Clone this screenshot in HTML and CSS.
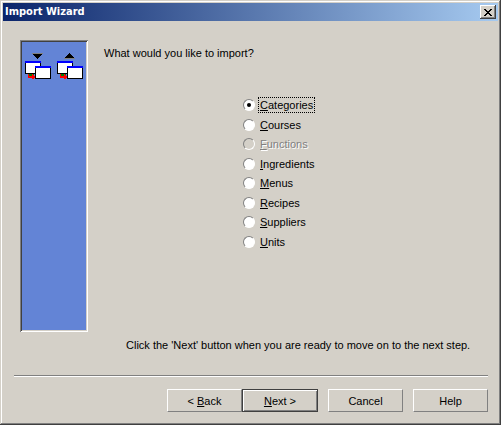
FILE: index.html
```
<!DOCTYPE html>
<html lang="en">
<head>
    <meta charset="UTF-8">
    <meta name="viewport" content="width=device-width, initial-scale=1.0">
    <title>Import Wizard</title>
    <link rel="stylesheet" href="styles.css">
</head>
<body>
    <form class="window">
        <div class="titlebar">
            <h1>Import Wizard</h1>
            <button type="button" class="close" aria-label="Close">
                <svg width="8" height="7" viewBox="0 0 8 7" shape-rendering="crispEdges">
                    <path d="M0 0h2v1h1v1h2v-1h1v-1h2v1h-1v1h-1v1h-1v1h1v1h1v1h1v1h-2v-1h-1v-1h-2v1h-1v1h-2v-1h1v-1h1v-1h1v-1h-1v-1h-1v-1h-1z"/>
                </svg>
            </button>
        </div>

        <div class="content">
            <div class="side">
                <svg width="27" height="27" viewBox="0 0 27 27" shape-rendering="crispEdges">
                    <path fill="#808080" d="M8 1h11v1h-11z"/>
                    <path d="M9 2h9v1h-1v1h-1v1h-1v1h-1v1h-1v-1h-1v-1h-1v-1h-1v-1h-1z"/>
                    <path d="M1 9h16v13h-16z"/>
                    <path fill="#fff" d="M2 11h14v10h-14z"/>
                    <path fill="#00f" d="M1 9h16v2h-16z"/>
                    <path fill="#008000" d="M5 22h5v2h-5z"/>
                    <path fill="#f00" d="M4 22h1v2h3v-2h1v1h1v1h1v2h-1v1h-2v-1h-4z"/>
                    <path d="M11 14h16v13h-16z"/>
                    <path fill="#fff" d="M12 16h14v10h-14z"/>
                    <path fill="#00f" d="M11 14h16v2h-16z"/>
                </svg>
                <svg width="27" height="27" viewBox="0 0 27 27" shape-rendering="crispEdges">
                    <path fill="#808080" d="M8 6h11v1h-11z"/>
                    <path d="M13 1h1v1h1v1h1v1h1v1h1v1h-9v-1h1v-1h1v-1h1v-1h1z"/>
                    <path d="M1 9h16v13h-16z"/>
                    <path fill="#fff" d="M2 11h14v10h-14z"/>
                    <path fill="#00f" d="M1 9h16v2h-16z"/>
                    <path fill="#008000" d="M5 22h5v2h-5z"/>
                    <path fill="#f00" d="M4 22h1v2h3v-2h1v1h1v1h1v2h-1v1h-2v-1h-4z"/>
                    <path d="M11 14h16v13h-16z"/>
                    <path fill="#fff" d="M12 16h14v10h-14z"/>
                    <path fill="#00f" d="M11 14h16v2h-16z"/>
                </svg>
            </div>
            <div class="main">
                <p id="question">What would you like to import?</p>
                <div class="options" role="radiogroup" aria-labelledby="question">
                    <label><input type="radio" name="type" checked><span class="focused"><u>C</u>ategories</span></label>
                    <label><input type="radio" name="type"><span><u>C</u>ourses</span></label>
                    <label class="disabled"><input type="radio" name="type" disabled><span><u>F</u>unctions</span></label>
                    <label><input type="radio" name="type"><span><u>I</u>ngredients</span></label>
                    <label><input type="radio" name="type"><span><u>M</u>enus</span></label>
                    <label><input type="radio" name="type"><span><u>R</u>ecipes</span></label>
                    <label><input type="radio" name="type"><span><u>S</u>uppliers</span></label>
                    <label><input type="radio" name="type"><span><u>U</u>nits</span></label>
                </div>
                <p class="hint">Click the 'Next' button when you are ready to move on to the next step.</p>
            </div>
        </div>

        <div class="footer">
            <div class="steps">
                <button type="button" class="btn">&lt; <u>B</u>ack</button>
                <button type="submit" class="btn default"><u>N</u>ext &gt;</button>
            </div>
            <button type="button" class="btn">Cancel</button>
            <button type="button" class="btn">Help</button>
        </div>
    </form>
</body>
</html>
```
FILE: styles.css
```
* {
    margin: 0;
    padding: 0;
    box-sizing: border-box;
}
body {
    font-family: "Liberation Sans", Arial, sans-serif;
    font-size: 11px;
    line-height: 14px;
    color: #000;
    background-color: #d4d0c8;
}
.window {
    display: flex;
    flex-direction: column;
    min-height: 100vh;
    padding: 3px;
    box-shadow: inset -1px -1px #404040, inset 1px 1px #d4d0c8, inset -2px -2px #808080, inset 2px 2px #fff;
}
.titlebar {
    display: flex;
    align-items: center;
    justify-content: space-between;
    height: 18px;
    padding: 0 2px;
    background: linear-gradient(to right, #0a246a, #a6caf0);
}
.titlebar h1 {
    font-family: "DejaVu Sans Condensed", "Noto Sans", sans-serif;
    font-size: 11px;
    font-weight: bold;
    color: #fff;
}
.close {
    display: flex;
    align-items: center;
    justify-content: center;
    width: 16px;
    height: 14px;
    border: none;
    background-color: #d4d0c8;
    box-shadow: inset -1px -1px #404040, inset 1px 1px #fff, inset -2px -2px #808080;
}
.content {
    display: flex;
    flex: 1;
    gap: 16px;
    padding: 19px 10px 0 17px;
}
.side {
    display: flex;
    gap: 5px;
    width: 68px;
    height: 292px;
    padding: 12px 4px;
    background-color: #6384d6;
    box-shadow: inset 1px 1px #808080, inset -1px -1px #fff, inset 2px 2px #404040, inset -2px -2px #d4d0c8;
}
.main {
    display: flex;
    flex: 1;
    flex-direction: column;
    padding-top: 6px;
}
.options {
    display: flex;
    flex-direction: column;
    align-items: flex-start;
    justify-content: space-between;
    height: 153px;
    margin: 37px 0 0 139px;
}
.options label {
    display: flex;
    align-items: center;
    gap: 4px;
    height: 16px;
}
.options span {
    padding: 0 1px;
    border: 1px solid transparent;
    margin-left: -1px;
}
.options .focused {
    border: 1px dotted #000;
}
.options input {
    appearance: none;
    display: grid;
    place-items: center;
    width: 12px;
    height: 12px;
    border: 1px solid;
    border-color: #808080 #fff #fff #808080;
    border-radius: 50%;
    background-color: #fff;
}
.options input:checked::before {
    content: "";
    width: 4px;
    height: 4px;
    border-radius: 50%;
    background-color: #000;
}
.options input:disabled {
    background-color: #d4d0c8;
}
.disabled {
    color: #808080;
    text-shadow: 1px 1px #fff;
}
.hint {
    margin-top: 88px;
    padding-left: 22px;
}
.footer {
    display: flex;
    justify-content: flex-end;
    gap: 10px;
    margin: 0 10px 10px 11px;
    padding-top: 13px;
    border-top: 1px solid #808080;
    box-shadow: inset 0 1px #fff;
}
.steps {
    display: flex;
}
.btn {
    width: 75px;
    height: 23px;
    border: 1px solid;
    border-color: #fff #808080 #808080 #fff;
    font: inherit;
    color: #000;
    background-color: #d4d0c8;
}
.default {
    width: 76px;
    border-color: #404040;
    box-shadow: inset 1px 1px #fff, inset -1px -1px #808080;
}
```
